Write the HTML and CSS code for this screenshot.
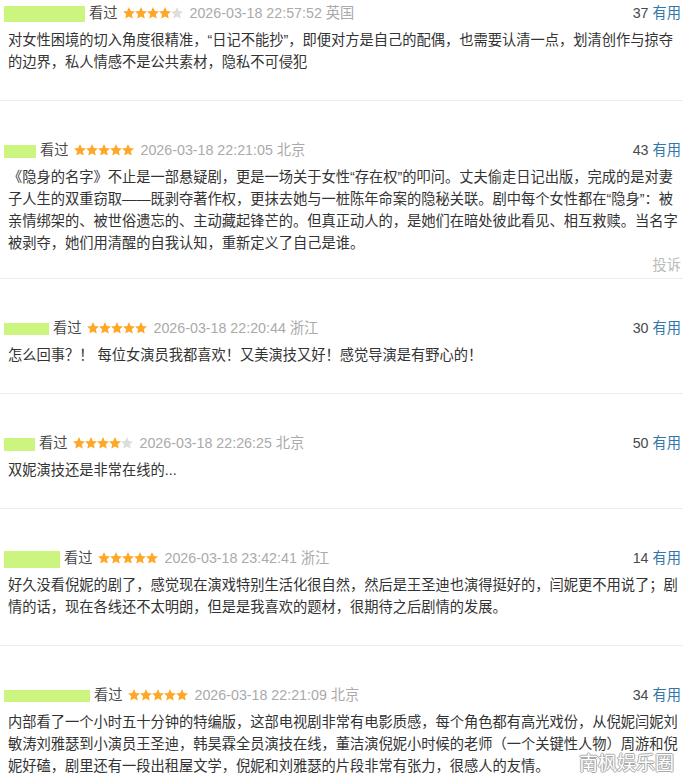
FILE: index.html
```html
<!DOCTYPE html>
<html lang="zh-CN">
<head>
  <meta charset="UTF-8">
  <meta name="viewport" content="width=device-width, initial-scale=1.0">
  <title>短评</title>
  <link rel="stylesheet" href="styles.css">
</head>
<body>
  <svg class="defs" width="0" height="0">
    <symbol id="star" viewBox="0 0 12 12">
      <polygon points="6,0.1 7.76,3.97 11.95,4.45 8.85,7.33 9.7,11.5 6,9.4 2.3,11.5 3.15,7.33 0.05,4.45 4.24,3.97" fill="currentColor"/>
    </symbol>
  </svg>

  <ul class="comments">
    <li class="comment">
      <div class="comment-head">
        <div class="who">
          <span class="cover" style="width:81px;height:16px"></span>
          <span class="seen">看过</span>
          <span class="stars">
            <svg class="star on"><use href="#star"/></svg>
            <svg class="star on"><use href="#star"/></svg>
            <svg class="star on"><use href="#star"/></svg>
            <svg class="star on"><use href="#star"/></svg>
            <svg class="star off"><use href="#star"/></svg>
          </span>
          <span class="time">2026-03-18 22:57:52 英国</span>
        </div>
        <div class="votes"><span class="num">37</span> <span class="useful">有用</span></div>
      </div>
      <p class="comment-text">对女性困境的切入角度很精准，“日记不能抄”，即便对方是自己的配偶，也需要认清一点，划清创作与掠夺的边界，私人情感不是公共素材，隐私不可侵犯</p>
    </li>

    <li class="comment reported">
      <div class="comment-head">
        <div class="who">
          <span class="cover" style="width:32px;height:13px"></span>
          <span class="seen">看过</span>
          <span class="stars">
            <svg class="star on"><use href="#star"/></svg>
            <svg class="star on"><use href="#star"/></svg>
            <svg class="star on"><use href="#star"/></svg>
            <svg class="star on"><use href="#star"/></svg>
            <svg class="star on"><use href="#star"/></svg>
          </span>
          <span class="time">2026-03-18 22:21:05 北京</span>
        </div>
        <div class="votes"><span class="num">43</span> <span class="useful">有用</span></div>
      </div>
      <p class="comment-text">《隐身的名字》不止是一部悬疑剧，更是一场关于女性“存在权”的叩问。丈夫偷走日记出版，完成的是对妻子人生的双重窃取——既剥夺著作权，更抹去她与一桩陈年命案的隐秘关联。剧中每个女性都在“隐身”：被亲情绑架的、被世俗遗忘的、主动藏起锋芒的。但真正动人的，是她们在暗处彼此看见、相互救赎。当名字被剥夺，她们用清醒的自我认知，重新定义了自己是谁。</p>
      <div class="report">投诉</div>
    </li>

    <li class="comment">
      <div class="comment-head">
        <div class="who">
          <span class="cover" style="width:45px;height:12px"></span>
          <span class="seen">看过</span>
          <span class="stars">
            <svg class="star on"><use href="#star"/></svg>
            <svg class="star on"><use href="#star"/></svg>
            <svg class="star on"><use href="#star"/></svg>
            <svg class="star on"><use href="#star"/></svg>
            <svg class="star on"><use href="#star"/></svg>
          </span>
          <span class="time">2026-03-18 22:20:44 浙江</span>
        </div>
        <div class="votes"><span class="num">30</span> <span class="useful">有用</span></div>
      </div>
      <p class="comment-text">怎么回事？！ 每位女演员我都喜欢！又美演技又好！感觉导演是有野心的！</p>
    </li>

    <li class="comment">
      <div class="comment-head">
        <div class="who">
          <span class="cover" style="width:31px;height:13px"></span>
          <span class="seen">看过</span>
          <span class="stars">
            <svg class="star on"><use href="#star"/></svg>
            <svg class="star on"><use href="#star"/></svg>
            <svg class="star on"><use href="#star"/></svg>
            <svg class="star on"><use href="#star"/></svg>
            <svg class="star off"><use href="#star"/></svg>
          </span>
          <span class="time">2026-03-18 22:26:25 北京</span>
        </div>
        <div class="votes"><span class="num">50</span> <span class="useful">有用</span></div>
      </div>
      <p class="comment-text">双妮演技还是非常在线的...</p>
    </li>

    <li class="comment">
      <div class="comment-head">
        <div class="who">
          <span class="cover" style="width:56px;height:17px"></span>
          <span class="seen">看过</span>
          <span class="stars">
            <svg class="star on"><use href="#star"/></svg>
            <svg class="star on"><use href="#star"/></svg>
            <svg class="star on"><use href="#star"/></svg>
            <svg class="star on"><use href="#star"/></svg>
            <svg class="star on"><use href="#star"/></svg>
          </span>
          <span class="time">2026-03-18 23:42:41 浙江</span>
        </div>
        <div class="votes"><span class="num">14</span> <span class="useful">有用</span></div>
      </div>
      <p class="comment-text">好久没看倪妮的剧了，感觉现在演戏特别生活化很自然，然后是王圣迪也演得挺好的，闫妮更不用说了；剧情的话，现在各线还不太明朗，但是是我喜欢的题材，很期待之后剧情的发展。</p>
    </li>

    <li class="comment">
      <div class="comment-head">
        <div class="who">
          <span class="cover" style="width:86px;height:12px"></span>
          <span class="seen">看过</span>
          <span class="stars">
            <svg class="star on"><use href="#star"/></svg>
            <svg class="star on"><use href="#star"/></svg>
            <svg class="star on"><use href="#star"/></svg>
            <svg class="star on"><use href="#star"/></svg>
            <svg class="star on"><use href="#star"/></svg>
          </span>
          <span class="time">2026-03-18 22:21:09 北京</span>
        </div>
        <div class="votes"><span class="num">34</span> <span class="useful">有用</span></div>
      </div>
      <p class="comment-text">内部看了一个小时五十分钟的特编版，这部电视剧非常有电影质感，每个角色都有高光戏份，从倪妮闫妮刘敏涛刘雅瑟到小演员王圣迪，韩昊霖全员演技在线，董洁演倪妮小时候的老师（一个关键性人物）周游和倪妮好磕，剧里还有一段出租屋文学，倪妮和刘雅瑟的片段非常有张力，很感人的友情。</p>
    </li>
  </ul>

  <div class="watermark">南枫娱乐圈</div>
</body>
</html>
```

FILE: styles.css
```css
body {
  margin: 0;
  font-family: "Liberation Sans", "Noto Sans CJK SC", sans-serif;
  font-size: 14.25px;
  color: #333;
  background-color: #fff;
  position: relative;
  height: 784px;
  overflow: hidden;
}

.defs {
  position: absolute;
}

.comments {
  list-style: none;
  margin: 0;
  padding: 0;
}

.comment {
  padding: 39px 2px 27px 8px;
  border-bottom: 1px solid #ececec;
}

.comment:first-child {
  padding-top: 3px;
}

.comment.reported {
  padding-bottom: 2px;
}

.comment-head {
  display: flex;
  justify-content: space-between;
  align-items: center;
  height: 20px;
  line-height: 20px;
}

.who {
  display: flex;
  align-items: center;
}

.cover {
  display: block;
  background-color: #ccf580; /* nombre tapado */
  margin: 2px 4px 0 -4px;
}

.seen {
  color: #494949;
  margin-right: 5px;
}

.stars {
  display: flex;
  margin-right: 7px;
}

.star {
  width: 12px;
  height: 12px;
}

.star.on {
  color: #ffa726;
}

.star.off {
  color: #ddd;
}

.time {
  color: #aaa;
}

.num {
  color: #494949;
}

.useful {
  color: #37a;
}

.comment-text {
  margin: 6px 0 0;
  line-height: 22px;
}

.report {
  text-align: right;
  color: #bbb;
  line-height: 22px;
}

.watermark {
  position: absolute;
  left: 579px;
  top: 750px;
  font-family: "Noto Sans CJK SC", sans-serif;
  font-size: 19px;
  line-height: 24px;
  color: #fff;
  text-shadow: 1px 0 0 #a8a8a8, -1px 0 0 #a8a8a8, 0 1px 0 #a8a8a8, 0 -1px 0 #a8a8a8;
}
```
